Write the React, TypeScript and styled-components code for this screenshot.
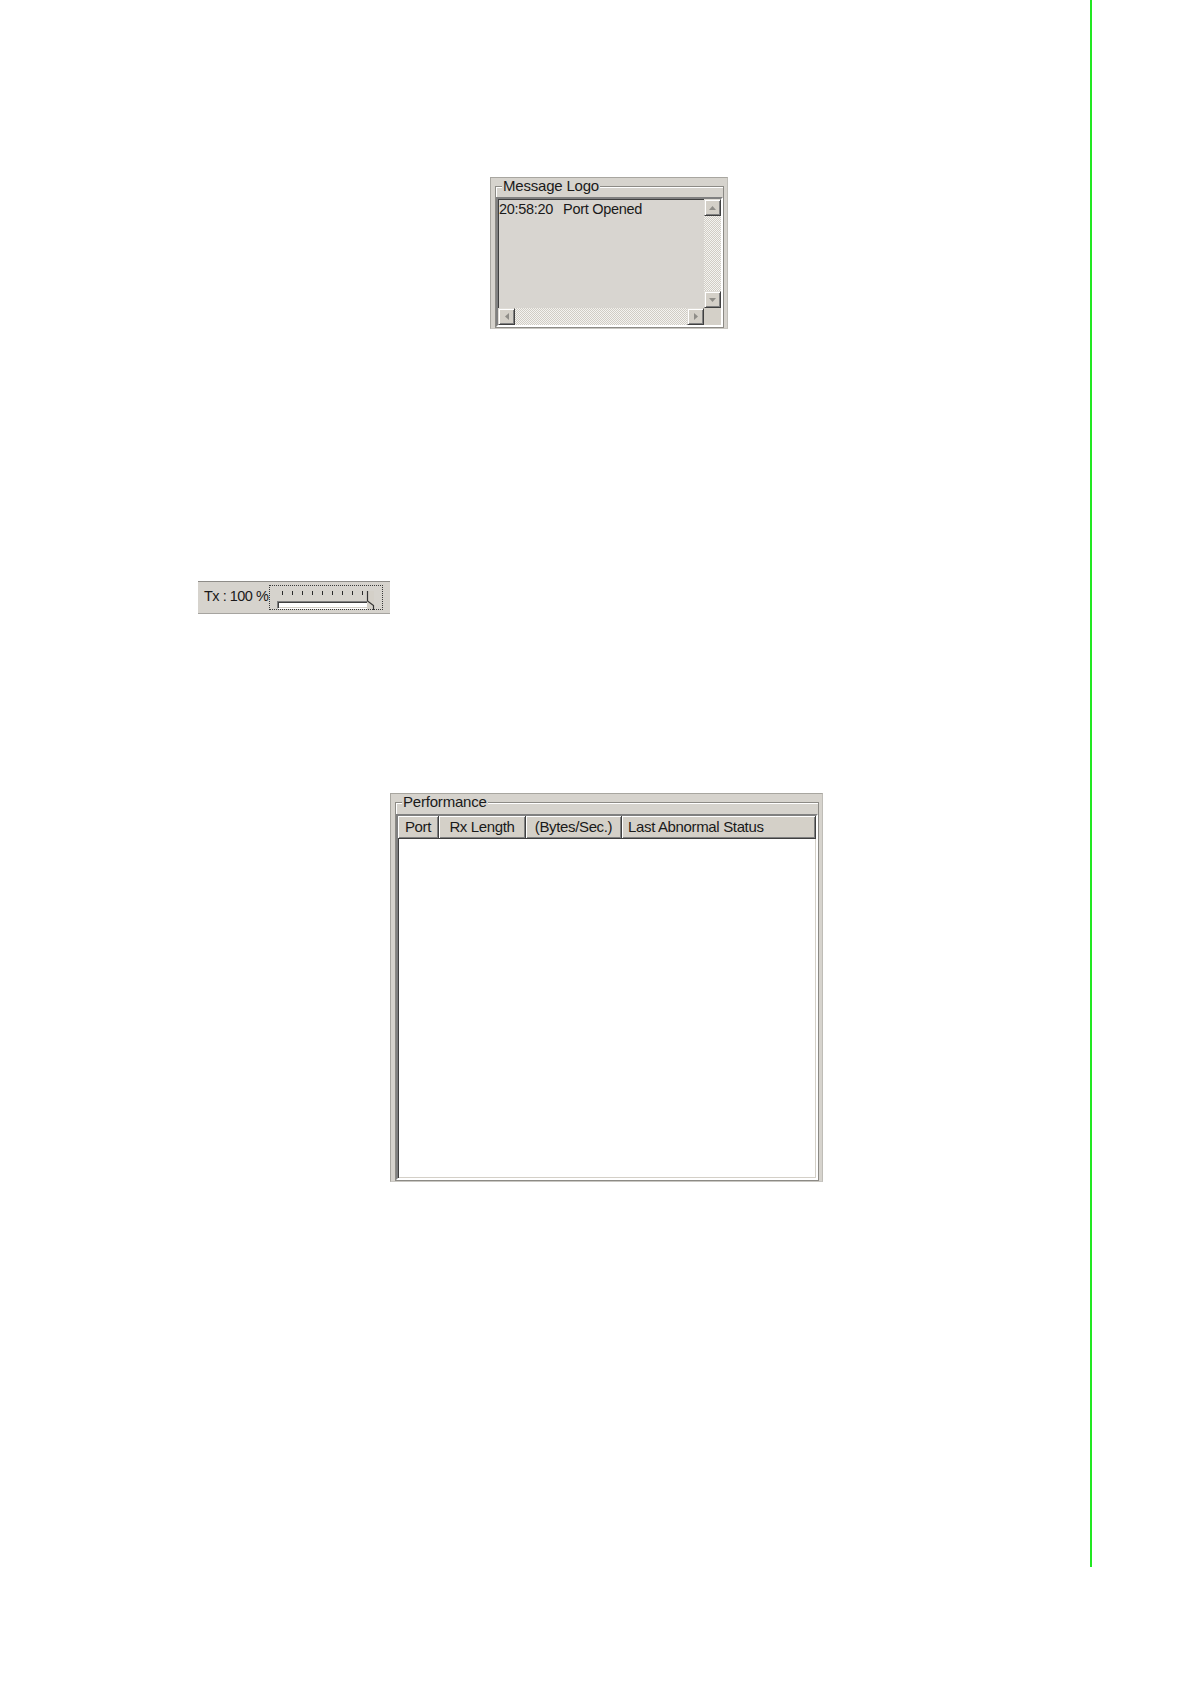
import React from "react";
import styled, { createGlobalStyle } from "styled-components";

const Global = createGlobalStyle`
  * { box-sizing: border-box; }
  html, body { margin: 0; padding: 0; background: #fff; }
  body { font-family: "Liberation Sans", Arial, sans-serif; color: #1a1a1a; }
`;

const FACE = "#d4d0c8";

const Page = styled.div`
  width: 1092px;
  min-height: 1567px;
  border-right: 2px solid #22e822;
  padding-top: 177px;
  display: flex;
  flex-direction: column;
  align-items: flex-start;
`;

const Panel = styled.div<{ $left: number; $top: number; $w: number; $h: number }>`
  margin-left: ${(p) => p.$left}px;
  margin-top: ${(p) => p.$top}px;
  width: ${(p) => p.$w}px;
  height: ${(p) => p.$h}px;
  background: #d6d3cd;
  border: 1px solid;
  border-color: #a8a6a0 #bfbdb7 #c9c7c2 #a8a6a0;
  padding: 0 3px 0 4px;
  display: flex;
`;

const Group = styled.fieldset`
  margin: 0;
  padding: 0;
  flex: 1;
  min-width: 0;
  border: 1px solid #8c8a85;
  box-shadow: inset 1px 1px 0 #fff;
  display: flex;
  flex-direction: column;
`;

const Legend = styled.legend`
  font-size: 15px;
  line-height: 16px;
  letter-spacing: -0.2px;
  padding: 0 1px;
  margin-left: 6px;
  background: #d6d3cd;
  color: #1a1a1a;
`;

const ListBox = styled.div<{ $mt: number; $bg: string; $h: number }>`
  margin-top: ${(p) => p.$mt}px;
  height: ${(p) => p.$h}px;
  background: ${(p) => p.$bg};
  border: 2px solid;
  border-color: #808080 #fff #fff #808080;
  box-shadow: inset 1px 1px 0 #404040, inset -1px -1px 0 ${FACE};
`;

const LogGrid = styled.div`
  height: 100%;
  display: grid;
  grid-template-columns: 1fr 17px;
  grid-template-rows: 1fr 17px;
`;

const LogText = styled.div`
  padding: 2px 0 0 1px;
  font-size: 14.5px;
  line-height: 16px;
  letter-spacing: -0.3px;
  white-space: pre;
`;

const Time = styled.span`
  margin-right: 10px;
`;

const ScrollBar = styled.div<{ $dir: "v" | "h" }>`
  display: flex;
  flex-direction: ${(p) => (p.$dir === "v" ? "column" : "row")};
`;

const Track = styled.div`
  flex: 1;
  background: repeating-conic-gradient(#d0ccc4 0 25%, #f4f3f0 0 50%) 0 0 / 2px 2px;
`;

const ScrollBtn = styled.div`
  width: 17px;
  height: 17px;
  flex: none;
  background: ${FACE};
  border: 1px solid;
  border-color: #dfdcd6 #404040 #404040 #dfdcd6;
  box-shadow: inset 1px 1px 0 #fff, inset -1px -1px 0 #808080;
  display: flex;
  align-items: center;
  justify-content: center;
`;

const Corner = styled.div`
  background: ${FACE};
`;

const Arrow = ({ dir }: { dir: "up" | "down" | "left" | "right" }) => {
  const pts: Record<string, string> = {
    up: "0,4 3.5,0 7,4",
    down: "0,0 7,0 3.5,4",
    left: "4,0 4,7 0,3.5",
    right: "0,0 0,7 4,3.5",
  };
  const vert = dir === "up" || dir === "down";
  return (
    <svg width={vert ? 7 : 4} height={vert ? 4 : 7} viewBox={vert ? "0 0 7 4" : "0 0 4 7"}>
      <polygon points={pts[dir]} fill="#8f8d88" />
    </svg>
  );
};

/* Tx slider */
const TxBar = styled.div`
  margin-left: 198px;
  margin-top: 252px;
  width: 192px;
  height: 33px;
  background: #d6d3cd;
  border-top: 1px solid #8e8c88;
  border-bottom: 1px solid #a6a4a0;
  display: flex;
  align-items: center;
  padding-left: 6px;
`;

const TxLabel = styled.span`
  font-size: 14.5px;
  letter-spacing: -0.5px;
  line-height: 16px;
  color: #1a1a1a;
  margin-top: -4px;
`;

const SliderBox = styled.div`
  margin-left: 1px;
  width: 114px;
  height: 25px;
  border: 1px dotted #3a3a3a;
  position: relative;
  display: flex;
  flex-direction: column;
`;

const Ticks = styled.div`
  display: flex;
  gap: 9px;
  margin: 5px 0 0 12px;
`;

const Tick = styled.span`
  width: 1px;
  height: 4px;
  background: #2a2a2a;
`;

const Channel = styled.div`
  margin: 6px 0 0 7px;
  width: 93px;
  height: 8px;
  background: #fff;
  border: 1px solid;
  border-color: #808080 #fff #fff #808080;
  box-shadow: inset 1px 1px 0 #404040, inset -1px -1px 0 ${FACE};
`;

const Thumb = styled.svg`
  position: absolute;
  left: 96px;
  top: 5px;
`;

/* Performance */
const Header = styled.div`
  display: grid;
  grid-template-columns: 41px 87px 96px 1fr;
  height: 23px;
`;

const HeadCell = styled.div<{ $align: "center" | "left" }>`
  background: ${FACE};
  border-right: 1px solid #404040;
  border-bottom: 1px solid #404040;
  box-shadow: inset 1px 1px 0 #fff, inset -1px -1px 0 #808080;
  font-size: 15px;
  letter-spacing: -0.35px;
  line-height: 22px;
  color: #1a1a1a;
  white-space: nowrap;
  text-align: ${(p) => p.$align};
  padding-left: ${(p) => (p.$align === "left" ? "6px" : "0")};
`;

const PerfBody = styled.div`
  height: 100%;
  display: flex;
  flex-direction: column;
`;

const columns: { label: string; align: "center" | "left" }[] = [
  { label: "Port", align: "center" },
  { label: "Rx Length", align: "center" },
  { label: "(Bytes/Sec.)", align: "center" },
  { label: "Last Abnormal Status", align: "left" },
];

export default function App() {
  return (
    <>
      <Global />
      <Page>
        <Panel $left={490} $top={0} $w={238} $h={152}>
          <Group>
            <Legend>Message Logo</Legend>
            <ListBox $mt={3} $bg="#d8d5d0" $h={130}>
              <LogGrid>
                <LogText>
                  <Time>20:58:20</Time>Port Opened
                </LogText>
                <ScrollBar $dir="v">
                  <ScrollBtn>
                    <Arrow dir="up" />
                  </ScrollBtn>
                  <Track />
                  <ScrollBtn>
                    <Arrow dir="down" />
                  </ScrollBtn>
                </ScrollBar>
                <ScrollBar $dir="h">
                  <ScrollBtn>
                    <Arrow dir="left" />
                  </ScrollBtn>
                  <Track />
                  <ScrollBtn>
                    <Arrow dir="right" />
                  </ScrollBtn>
                </ScrollBar>
                <Corner />
              </LogGrid>
            </ListBox>
          </Group>
        </Panel>

        <TxBar>
          <TxLabel>Tx : 100 %</TxLabel>
          <SliderBox>
            <Ticks>
              {Array.from({ length: 9 }).map((_, i) => (
                <Tick key={i} />
              ))}
            </Ticks>
            <Channel />
            <Thumb width="10" height="19" viewBox="0 0 10 19">
              <polygon points="1,0 8,0 8,13 5,18 1,18" fill={FACE} />
              <path d="M1.5 0 V10 L7.5 14.5 V19" stroke="#333" strokeWidth="1.2" fill="none" />
            </Thumb>
          </SliderBox>
        </TxBar>

        <Panel $left={390} $top={179} $w={433} $h={389}>
          <Group>
            <Legend>Performance</Legend>
            <ListBox $mt={4} $bg="#fff" $h={366}>
              <PerfBody>
                <Header>
                  {columns.map((c) => (
                    <HeadCell key={c.label} $align={c.align}>
                      {c.label}
                    </HeadCell>
                  ))}
                </Header>
              </PerfBody>
            </ListBox>
          </Group>
        </Panel>
      </Page>
    </>
  );
}
